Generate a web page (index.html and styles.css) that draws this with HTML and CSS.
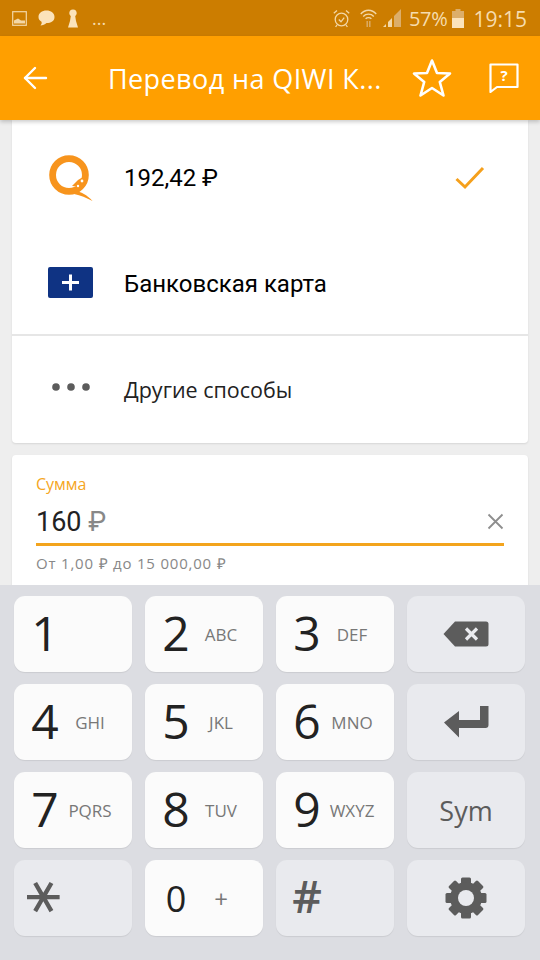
FILE: index.html
```html
<!DOCTYPE html>
<html lang="ru">
<head>
	<meta charset="UTF-8">
	<meta name="viewport" content="width=device-width, initial-scale=1.0">
	<title>Перевод на QIWI Кошелек</title>
	<link rel="stylesheet" href="styles.css">
</head>
<body>
	<div class="screen">
		<div class="status-bar">
			<div class="status-left">
				<svg class="ico" width="15" height="15" viewBox="0 0 15 15"><rect x="0.7" y="0.7" width="13.6" height="13.6" fill="none" stroke="#f3d7a6" stroke-width="1.2"/><path d="M2 12.5 L2 9.5 L6 7.5 L9 9.5 L13 9.5 L13 12.5 Z" fill="#f3d7a6"/></svg>
				<svg class="ico" width="17" height="16" viewBox="0 0 17 16"><path d="M8.5 0.5 C13 0.5 16.5 3 16.5 7 C16.5 11 13 13 8.5 13 C7 14.5 4.5 15.5 2.5 15.5 C3.5 14.5 4 13 3.5 11.8 C1.5 10.7 0.5 9 0.5 7 C0.5 3 4 0.5 8.5 0.5 Z" fill="#fbe3bb"/></svg>
				<svg class="ico key-ico" width="12" height="19" viewBox="0 0 12 19"><path d="M6 0.5 C8.5 0.5 9.7 2.2 9.7 4 C9.7 5.4 9 6.4 8.2 7 L9 12 L11 18.5 L1 18.5 L3 12 L3.8 7 C3 6.4 2.3 5.4 2.3 4 C2.3 2.2 3.5 0.5 6 0.5 Z" fill="#fbe3bb"/></svg>
				<span class="status-more">...</span>
			</div>
			<div class="status-right">
				<svg class="ico alarm" width="17" height="19" viewBox="0 0 17 19" fill="none" stroke="#f3d7a6" stroke-width="1.3"><circle cx="8.5" cy="10.5" r="6.3"/><path d="M5.8 10.5 L8 12.8 L11.2 8.6"/><path d="M0.8 4.2 L4 1.4 M16.2 4.2 L13 1.4 M4 16 L2.6 18 M13 16 L14.4 18"/></svg>
				<svg class="ico wifi" width="17" height="19" viewBox="0 0 17 19" fill="none" stroke="#f3d7a6" stroke-width="1.4"><path d="M0.8 5 C5 0 12 0 16.2 5"/><path d="M3.2 7.4 C6 4.4 11 4.4 13.8 7.4"/><path d="M5.6 9.8 C7.2 8.2 9.8 8.2 11.4 9.8"/><path d="M7.2 12 L7.2 18 M9.8 12 L9.8 18" stroke="#dcae6a"/></svg>
				<svg class="ico signal" width="19" height="18" viewBox="0 0 19 18"><path d="M0 18 L3 18 L3 15 Z" fill="#f3d7a6"/><path d="M5 18 L5 13 L9 9 L9 18 Z" fill="#f3d7a6"/><path d="M11 18 L11 7 L18 0 L18 18 Z" fill="#dcae6a"/></svg>
				<span class="status-pct">57%</span>
				<svg class="ico battery" width="12" height="19" viewBox="0 0 12 19"><rect x="3.5" y="0" width="5" height="2" fill="#dcae6a"/><rect x="0" y="2" width="12" height="7" fill="#dcae6a"/><rect x="0" y="9" width="12" height="10" fill="#fbe3bb"/></svg>
				<span class="status-time">19:15</span>
			</div>
		</div>

		<header class="app-bar">
			<svg class="back" width="25" height="24" viewBox="0 0 25 24" fill="none" stroke="#fff" stroke-width="2.4" stroke-linecap="round" stroke-linejoin="round"><path d="M2 12 L23 12"/><path d="M12 2 L2 12 L12 22"/></svg>
			<div class="app-title">Перевод на QIWI К...</div>
			<svg class="star" width="40" height="40" viewBox="0 0 40 40" fill="none" stroke="#fff" stroke-width="2.6" stroke-linejoin="round"><path d="M20 2.5 L25 15 L38 15.5 L27.8 24 L31.5 37.5 L20 30 L8.5 37.5 L12.2 24 L2 15.5 L15 15 Z"/></svg>
			<svg class="help" width="30" height="30" viewBox="0 0 30 30"><path d="M1.5 1.5 L28.5 1.5 L28.5 24 L8 24 L1.5 29 Z" fill="none" stroke="#fff" stroke-width="2.2" stroke-linejoin="round"/><text x="15" y="18" class="help-mark">?</text></svg>
		</header>

		<main class="content">
			<section class="card methods">
				<div class="method method-wallet">
					<div class="method-icon">
						<svg width="46" height="50" viewBox="0 0 46 50"><circle cx="21" cy="22" r="16.4" fill="none" stroke="#f7941d" stroke-width="6.8"/><path d="M22 37 C26 35 31 34 35 31 L33 37 C29 39.500 25 39.500 22 37 Z" fill="#f7941d"/><path d="M27 38 C33 38.500 39 42 44.500 48 C38 44.500 33 42.500 26 41 Z" fill="#f7941d"/><path d="M24 33 L30 27 L35 24 L35 34 Z" fill="#f7941d"/><circle cx="34" cy="28" r="1.4" fill="#fff"/><circle cx="30" cy="33" r="1.200" fill="#fff"/></svg>
					</div>
					<div class="method-name">192,42 ₽</div>
					<svg class="tick" width="30" height="24" viewBox="0 0 30 24" fill="none" stroke="#f5a01c" stroke-width="3"><path d="M1.5 13 L10 21 L28 2"/></svg>
				</div>
				<div class="method method-card">
					<div class="method-icon">
						<svg width="45" height="31" viewBox="0 0 45 31"><rect width="45" height="31" rx="2" fill="#0f3383"/><path d="M22.5 7.5 L22.5 23.5 M14 15.5 L31 15.5" stroke="#fff" stroke-width="3"/></svg>
					</div>
					<div class="method-name">Банковская карта</div>
				</div>
				<div class="method method-other">
					<div class="method-icon">
						<svg width="38" height="8" viewBox="0 0 38 8"><circle cx="4" cy="4" r="3.8" fill="#5c5c5c"/><circle cx="19" cy="4" r="3.8" fill="#5c5c5c"/><circle cx="34" cy="4" r="3.8" fill="#5c5c5c"/></svg>
					</div>
					<div class="method-name hand">Другие способы</div>
				</div>
			</section>

			<section class="card amount">
				<div class="amount-label">Сумма</div>
				<div class="amount-field">
					<div class="amount-value">160 <span class="amount-cur">₽</span></div>
					<svg width="17" height="17" viewBox="0 0 17 17" stroke="#8e8e8e" stroke-width="1.8"><path d="M1.5 1.5 L15.5 15.5 M15.5 1.5 L1.5 15.5"/></svg>
				</div>
				<div class="amount-hint">От 1,00 ₽ до 15 000,00 ₽</div>
			</section>
		</main>

		<div class="keyboard">
			<div class="key"><span class="digit">1</span></div>
			<div class="key"><span class="digit">2</span><span class="letters">ABC</span></div>
			<div class="key"><span class="digit">3</span><span class="letters">DEF</span></div>
			<div class="key fn">
				<svg width="46" height="26" viewBox="0 0 46 26"><path d="M12 0.5 L43 0.5 Q45.5 0.5 45.5 3 L45.5 23 Q45.5 25.5 43 25.5 L12 25.5 L0.5 13 Z" fill="#5c5c5c"/><path d="M23 7.5 L34 18.5 M34 7.5 L23 18.5" stroke="#eaebef" stroke-width="3.2"/></svg>
			</div>
			<div class="key"><span class="digit">4</span><span class="letters">GHI</span></div>
			<div class="key"><span class="digit">5</span><span class="letters">JKL</span></div>
			<div class="key"><span class="digit">6</span><span class="letters">MNO</span></div>
			<div class="key fn">
				<svg width="45" height="32" viewBox="0 0 45 32"><path d="M36 0 L44.5 0 L44.5 19 Q44.5 22 41.5 22 L15 22 L15 31.5 L0 16.5 L15 5 L15 14 L36 14 Z" fill="#5c5c5c"/></svg>
			</div>
			<div class="key"><span class="digit">7</span><span class="letters">PQRS</span></div>
			<div class="key"><span class="digit">8</span><span class="letters">TUV</span></div>
			<div class="key"><span class="digit">9</span><span class="letters">WXYZ</span></div>
			<div class="key fn"><span class="sym">Sym</span></div>
			<div class="key fn"><span class="digit mark star-mark">∗</span></div>
			<div class="key"><span class="digit zero">0</span><span class="letters plus">+</span></div>
			<div class="key fn"><span class="digit mark hash-mark">#</span></div>
			<div class="key fn">
				<svg width="42" height="42" viewBox="0 0 42 42"><g fill="#5c5c5c"><rect x="16" y="0.5" width="10" height="41" rx="1.5"/><rect x="16" y="0.5" width="10" height="41" rx="1.5" transform="rotate(45 21 21)"/><rect x="16" y="0.5" width="10" height="41" rx="1.5" transform="rotate(90 21 21)"/><rect x="16" y="0.5" width="10" height="41" rx="1.5" transform="rotate(135 21 21)"/><circle cx="21" cy="21" r="16"/></g><circle cx="21" cy="21" r="8" fill="#e9eaee"/></svg>
			</div>
		</div>
	</div>
</body>
</html>
```

FILE: styles.css
```css
* {
	box-sizing: border-box;
}
body {
	margin: 0;
	background-color: #eee;
	font-family: "Open Sans", sans-serif;
}
.screen {
	display: flex;
	flex-direction: column;
	width: 540px;
	height: 960px;
	overflow: hidden;
}
.ico {
	display: block;
	flex: none;
}

/* status bar */
.status-bar {
	display: flex;
	justify-content: space-between;
	align-items: center;
	flex: none;
	height: 36px;
	padding: 0 13px 0 12px;
	background-color: #cc7d00;
	color: #f6dcae;
}
.status-left {
	display: flex;
	align-items: center;
	gap: 11px;
}
.key-ico {
	margin-left: 1px;
}
.status-more {
	margin-left: 2px;
	font-size: 18px;
	line-height: 22px;
}
.status-right {
	display: flex;
	align-items: center;
}
.wifi {
	margin-left: 10px;
}
.signal {
	margin-left: 6px;
}
.status-pct {
	margin-left: 7px;
	padding-top: 1px;
	font-size: 20px;
	letter-spacing: -0.3px;
}
.battery {
	margin-left: 5px;
}
.status-time {
	margin-left: 9px;
	padding-top: 1px;
	font-size: 21px;
}

/* app bar */
.app-bar {
	position: relative;
	z-index: 2;
	display: flex;
	align-items: center;
	flex: none;
	height: 84px;
	padding: 0 21px 0 23px;
	background-color: #ff9f00;
	box-shadow: 0 2px 4px rgba(0, 0, 0, 0.2);
	color: #fff;
}
.back {
	flex: none;
}
.app-title {
	flex: 1;
	margin-left: 60px;
	font-size: 27px;
	letter-spacing: 0.4px;
	white-space: nowrap;
}
.star {
	flex: none;
	margin-right: 37px;
}
.help {
	flex: none;
	margin-top: -1px;
}
.help-mark {
	fill: #fff;
	font-size: 15px;
	font-weight: 700;
	text-anchor: middle;
}

/* cards */
.content {
	flex: 1;
	min-height: 0;
	padding: 0 12px;
}
.card {
	background-color: #fff;
	border-radius: 0 0 4px 4px;
	box-shadow: 0 1px 2px rgba(0, 0, 0, 0.1);
}
.method {
	display: flex;
	align-items: center;
	padding-right: 43px;
	color: #000;
}
.method-wallet {
	height: 115px;
}
.method-card {
	height: 101px;
	padding-bottom: 2px;
	border-bottom: 2px solid #e6e6e6;
}
.method-card .method-icon svg {
	margin-top: -3px;
}
.method-other {
	height: 107px;
}
.method-other .method-icon svg {
	margin-top: -5px;
}
.method-icon {
	display: flex;
	justify-content: center;
	flex: none;
	width: 112px;
	padding-left: 5px;
}
.method-name {
	flex: 1;
	font-family: Roboto, sans-serif;
	font-size: 24px;
}
.method-name.hand {
	font-family: "Open Sans", sans-serif;
	font-size: 21.5px;
	color: #222;
}
.tick {
	flex: none;
}
.amount {
	height: 200px;
	margin-top: 12px;
	padding: 18px 24px;
	border-radius: 4px;
}
.amount-label {
	font-size: 16px;
	line-height: 22px;
	color: #f5a623;
}
.amount-field {
	display: flex;
	justify-content: space-between;
	align-items: center;
	height: 51px;
	padding-top: 5px;
	border-bottom: 3px solid #f3a41d;
}
.amount-value {
	font-family: Roboto, sans-serif;
	font-size: 27px;
	color: #222;
}
.amount-cur {
	color: #888;
}
.amount-hint {
	margin-top: 7px;
	font-size: 15px;
	letter-spacing: 0.8px;
	color: #888;
}

/* keyboard */
.keyboard {
	display: grid;
	grid-template-columns: repeat(4, 118px);
	grid-template-rows: repeat(4, 76px);
	gap: 12px 13px;
	flex: none;
	height: 375px;
	padding: 11px 14px 0;
	background-color: #dcdde2;
}
.key {
	display: flex;
	align-items: center;
	border-radius: 11px;
	background-color: #fbfbfb;
	box-shadow: 0 1px 1px rgba(0, 0, 0, 0.08);
}
.key.fn {
	justify-content: center;
	background-color: #e9eaee;
}
.key.fn .digit {
	margin-right: auto;
}
.digit {
	flex: none;
	width: 62px;
	margin-top: -4px;
	font-size: 48px;
	text-align: center;
	color: #222;
}
.digit.zero {
	margin-top: 0;
	font-size: 36px;
}
.digit.mark {
	color: #5c5c5c;
}
.star-mark {
	margin-top: -2px;
	font-family: "DejaVu Sans", sans-serif;
	font-size: 52px;
	line-height: 52px;
	transform: rotate(90deg);
}
.hash-mark {
	margin-top: -6px;
	font-size: 46px;
	font-weight: 600;
}
.letters {
	display: flex;
	justify-content: center;
	flex: none;
	width: 28px;
	font-size: 17px;
	white-space: nowrap;
	color: #777;
}
.plus {
	font-size: 24px;
}
.sym {
	font-size: 27px;
	color: #5c5c5c;
}
```
